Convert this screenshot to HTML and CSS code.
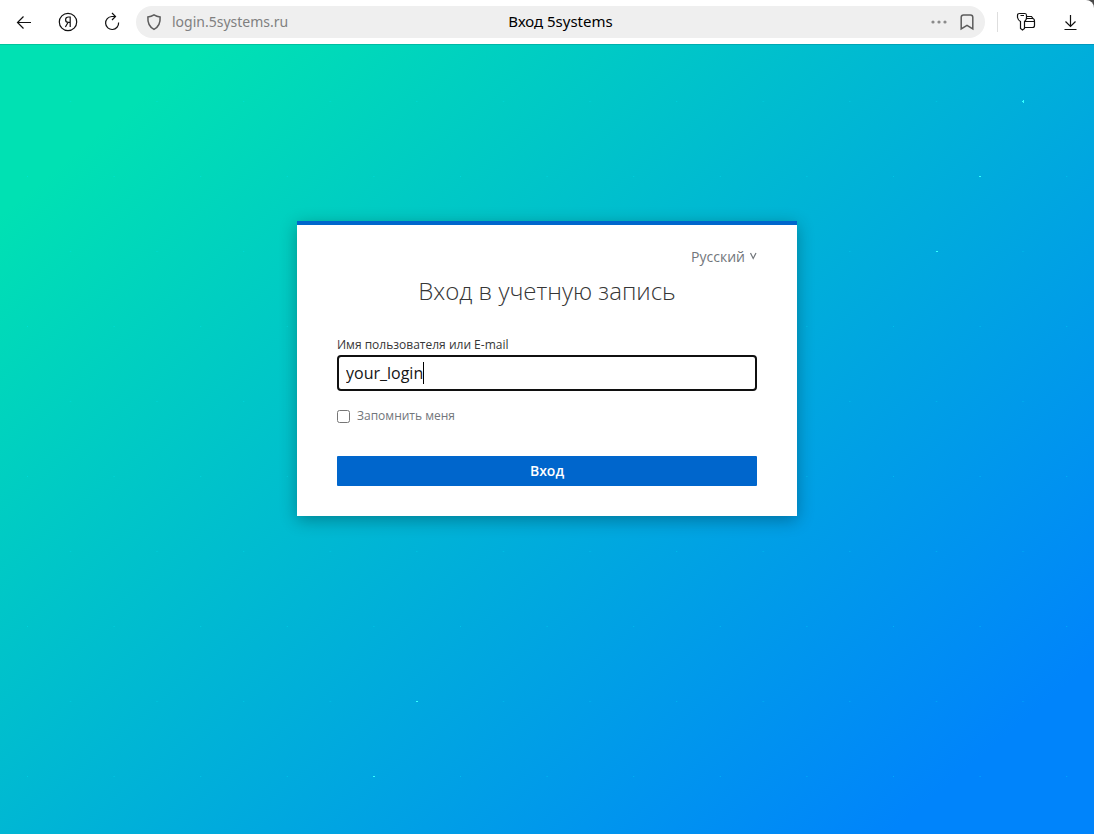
FILE: index.html
```html
<!DOCTYPE html>
<html lang="ru">
<head>
<meta charset="utf-8">
<meta name="viewport" content="width=device-width, initial-scale=1">
<title>Вход 5systems</title>
<link rel="stylesheet" href="styles.css">
</head>
<body>
<header class="toolbar">
  <nav class="nav-buttons">
    <button class="icon-button" type="button" aria-label="Назад">
      <svg width="20" height="20" viewBox="0 0 20 20"><path d="M17 10.500H3.500M9.500 4.500L3.500 10.500L9.500 16.500"/></svg>
    </button>
    <button class="icon-button" type="button" aria-label="Яндекс">
      <svg width="20" height="20" viewBox="0 0 20 20"><circle cx="10" cy="10" r="8.700"/><path d="M12.200 15V5H10.500C8.600 5 7.600 6.100 7.600 7.800C7.600 9.400 8.600 10.400 10.200 10.400H12.200M10 10.500L7.400 15"/></svg>
    </button>
    <button class="icon-button" type="button" aria-label="Обновить">
      <svg width="20" height="20" viewBox="0 0 20 20"><path d="M13.500 4.500H9.800A6.500 6.500 0 1 0 16.600 10.500M10 1L13.500 4.500L10 8"/></svg>
    </button>
  </nav>
  <div class="address-bar">
    <div class="address">
      <svg class="muted-icon" width="16" height="18" viewBox="0 0 16 18"><path d="M8 1.800C6.300 2.900 4.200 3.700 1.900 4C1.500 9.600 3.400 14 8 16.300C12.600 14 14.500 9.600 14.100 4C11.800 3.700 9.700 2.900 8 1.800Z"/></svg>
      <input class="url" type="text" value="login.5systems.ru" aria-label="Адрес страницы">
    </div>
    <span class="page-title">Вход 5systems</span>
    <div class="address-actions">
      <button class="icon-button small" type="button" aria-label="Ещё">
        <svg class="dots" width="16" height="18" viewBox="0 0 16 18"><circle cx="2" cy="9" r="1.600"/><circle cx="8" cy="9" r="1.600"/><circle cx="14" cy="9" r="1.600"/></svg>
      </button>
      <button class="icon-button small" type="button" aria-label="В закладки">
        <svg class="muted-icon" width="16" height="18" viewBox="0 0 16 18"><path d="M2.200 16V4.300Q2.200 2 4.500 2H11.500Q13.800 2 13.800 4.300V16L8 12.300Z"/></svg>
      </button>
    </div>
  </div>
  <div class="tools">
    <button class="icon-button" type="button" aria-label="Пароли">
      <svg width="20" height="20" viewBox="0 0 20 20"><path d="M3.500 1.500H9Q10.500 1.500 10.500 3.500V6Q10.500 8 8.500 9.500V16.500L6.500 18L4.500 16.500V9.500Q2 8 1.500 5.500V3.500Q1.500 1.500 3.500 1.500ZM4.500 3.500H8M10.500 4.500H15.500L17 6.500M8.500 15.500H16.500Q18.500 15.500 18.500 13.500V9.500Q18.500 6.500 16.500 6.500H10.500M9 9.500H18.500"/></svg>
    </button>
    <button class="icon-button" type="button" aria-label="Загрузки">
      <svg width="20" height="20" viewBox="0 0 20 20"><path d="M10.500 3V14.500M5.500 9.500L10.500 14.500L15.500 9.500M4.500 17.500H16.500"/></svg>
    </button>
  </div>
</header>
<main class="page">
  <svg class="stars" width="100%" height="100%" aria-hidden="true">
    <defs>
      <pattern id="faint-stars" patternUnits="userSpaceOnUse" x="27" y="57" width="86.600" height="150">
        <rect class="faint" x="43" y="0" width="1" height="1"/>
        <rect class="faint" x="0" y="75" width="1" height="1"/>
      </pattern>
    </defs>
    <rect width="100%" height="100%" fill="url(#faint-stars)"/>
    <path class="bright" d="M1022 57h2v1h-2zM1023 56h1v3h-1zM979 132h2v1h-2zM936 207h2v1h-2zM416 657h2v1h-2zM373 732h2v1h-2z"/>
  </svg>
  <form class="card">
    <div class="locale">
      <select class="locale-select" aria-label="Язык"><option>Русский</option></select>
      <svg class="chevron" width="8" height="8" viewBox="0 0 8 8"><path d="M1.500 1L4.200 6.500L7 1"/></svg>
    </div>
    <h1 class="heading">Вход в учетную запись</h1>
    <label class="field-label" for="username">Имя пользователя или E-mail</label>
    <div class="field">
      <input class="field-input" id="username" type="text" value="your_login" autocomplete="username"><span class="caret"></span>
    </div>
    <label class="remember"><input class="checkbox" type="checkbox">Запомнить меня</label>
    <button class="submit" type="submit">Вход</button>
  </form>
</main>
</body>
</html>
```
FILE: styles.css
```css
* {
  box-sizing: border-box;
}

body {
  margin: 0;
  min-height: 100vh;
  display: flex;
  flex-direction: column;
  background: #484848;
  font-family: "Open Sans", "Noto Sans", sans-serif;
}

button,
input,
select {
  margin: 0;
  padding: 0;
  border: 0;
  background: none;
  font: inherit;
  color: inherit;
}

svg {
  display: block;
  fill: none;
  stroke: #111;
  stroke-width: 1.2;
}

.toolbar {
  display: flex;
  align-items: center;
  height: 44px;
  padding: 0 14px;
  background: #fff;
  border-top-right-radius: 8px;
}

.nav-buttons,
.tools {
  display: flex;
  gap: 24px;
}

.icon-button {
  width: 20px;
  height: 20px;
}

.icon-button.small {
  width: 16px;
  height: 18px;
}

.address-bar {
  flex: 1;
  display: grid;
  grid-template-columns: 1fr auto 1fr;
  align-items: center;
  height: 32px;
  margin: 0 12px 0 14px;
  padding: 0 10px;
  border-radius: 16px;
  background: #efefef;
  font-family: "Noto Sans", sans-serif;
  font-size: 15px;
}

.address {
  display: flex;
  align-items: center;
  gap: 10px;
}

.url {
  flex: 1;
  min-width: 0;
  padding-bottom: 2px;
  color: #808080;
  font-size: 14px;
}

.page-title {
  padding-bottom: 2px;
  color: #000;
}

.address-actions {
  display: flex;
  justify-content: flex-end;
  gap: 12px;
}

.muted-icon {
  stroke: #5c5c5c;
  stroke-width: 1.5;
}

.dots {
  fill: #8a8a8a;
  stroke: none;
}

.tools {
  padding-left: 18px;
  border-left: 1px solid #dedede;
}

.page {
  position: relative;
  flex: 1;
  display: flex;
  flex-direction: column;
  align-items: center;
  padding: 177px 20px 40px;
  background: linear-gradient(140deg, #00e1b3 10%, #0084fb 90%);
  box-shadow: inset 0 1px 0 rgba(0, 0, 0, 0.12);
}

.stars {
  position: absolute;
  inset: 0;
  stroke: none;
}

.faint {
  fill: #00f0ff;
  fill-opacity: 0.35;
}

.bright {
  fill: #3ff;
}

.card {
  position: relative;
  display: flex;
  flex-direction: column;
  width: 100%;
  max-width: 500px;
  padding: 20px 40px 30px;
  border-top: 4px solid #06c;
  background: #fff;
  box-shadow: 0 4px 16px rgba(0, 0, 0, 0.3);
}

.locale {
  display: flex;
  justify-content: flex-end;
  align-items: center;
  gap: 4px;
  height: 22px;
  color: #72767b;
  font-size: 14px;
}

.locale-select {
  appearance: none;
  field-sizing: content;
}

.chevron {
  stroke: #72767b;
}

.heading {
  margin: 6px 0 27px;
  color: #363636;
  font-size: 24px;
  font-weight: 300;
  line-height: 36px;
  text-align: center;
}

.field-label {
  color: #363636;
  font-size: 12px;
  line-height: 18px;
}

.field {
  display: flex;
  align-items: center;
  height: 36px;
  margin-top: 1px;
  padding: 0 7px;
  border: 2px solid #101010;
  border-radius: 4px;
  color: #151515;
  font-size: 16px;
}

.field-input {
  field-sizing: content;
  max-width: 100%;
  outline: 0;
}

.caret {
  width: 1px;
  height: 22px;
  background: #000;
}

.remember {
  display: flex;
  align-items: center;
  gap: 7px;
  margin-top: 16px;
  color: #72767b;
  font-size: 12px;
  line-height: 18px;
}

.checkbox {
  width: 13px;
  height: 13px;
}

.submit {
  height: 30px;
  margin-top: 31px;
  padding-bottom: 2px;
  border-radius: 1px;
  background: #06c;
  color: #fff;
  font-size: 14px;
  font-weight: 600;
}
```
